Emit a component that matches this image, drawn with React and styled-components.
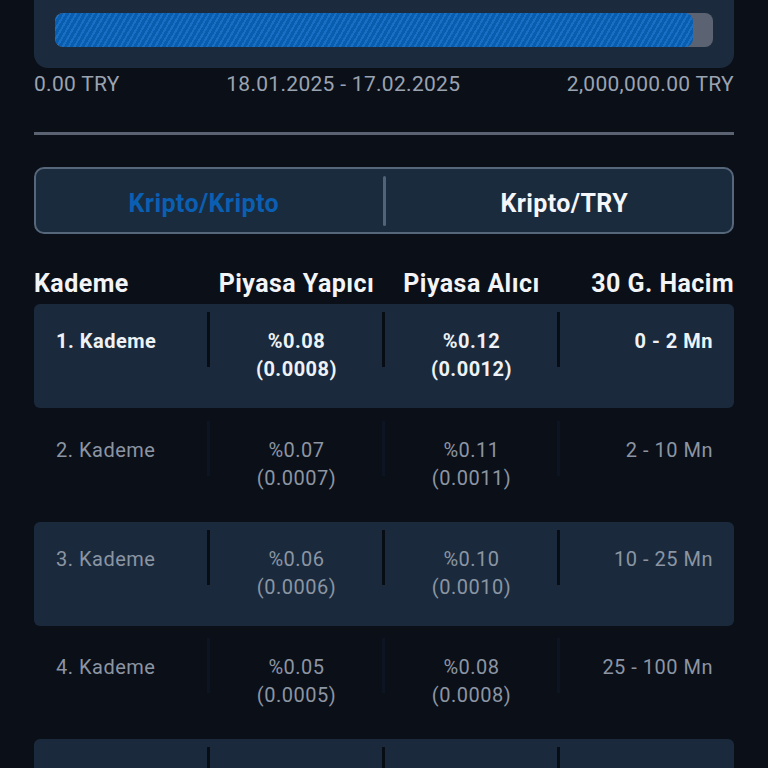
import React from "react";
import styled, { createGlobalStyle } from "styled-components";

const Global = createGlobalStyle`
  html, body { margin: 0; padding: 0; background: #0b0f18; }
  body { font-family: Roboto, "Noto Sans", sans-serif; }
`;

const Page = styled.div`
  width: 700px;
  margin: 0 34px;
`;

const ProgressCard = styled.div`
  background: #1b2b3d;
  border-radius: 0 0 14px 14px;
  padding: 13px 21px 21px;
`;

const Track = styled.div`
  height: 34px;
  background: #5b6373;
  border-radius: 8px;
  overflow: hidden;
`;

const Fill = styled.div`
  height: 100%;
  border-radius: 8px;
  background-color: #0a66c0;
  background-image: repeating-linear-gradient(
    -60deg,
    rgba(255, 255, 255, 0.06) 0px,
    rgba(255, 255, 255, 0.06) 2px,
    rgba(0, 0, 0, 0.09) 2px,
    rgba(0, 0, 0, 0.09) 5px
  );
`;

const Labels = styled.div`
  display: flex;
  justify-content: space-between;
  margin-top: 4px;
  font-size: 21px;
  letter-spacing: 0.3px;
  line-height: 24px;
  color: #9aa3b1;
`;

const Divider = styled.div`
  height: 3px;
  background: #5b6272;
  margin-top: 36px;
`;

const Tabs = styled.div`
  margin-top: 32px;
  height: 63px;
  border: 2px solid #56677b;
  border-radius: 10px;
  background: #1a2b3d;
  display: flex;
  align-items: center;
`;

const Tab = styled.div`
  flex: 1;
  padding-top: 6px;
  text-align: center;
  font-size: 25px;
  letter-spacing: 0.4px;
  font-weight: 700;
  color: ${(p) => (p.$active ? "#0b5fb3" : "#f4f6f9")};
`;

const TabSep = styled.div`
  width: 3px;
  height: 50px;
  margin: 0 11px;
  background: #4f6479;
  border-radius: 2px;
`;

const Grid = styled.div`
  display: grid;
  grid-template-columns: repeat(4, 1fr);
`;

const HeaderRow = styled(Grid)`
  margin-top: 36px;
  font-size: 25px;
  letter-spacing: 0.45px;
  font-weight: 700;
  line-height: 28px;
  color: #f2f4f7;
`;

const HeadCell = styled.div`
  text-align: ${(p) => p.$align};
`;

const Rows = styled.div`
  margin-top: 6px;
  display: flex;
  flex-direction: column;
  gap: 4.75px;
`;

const Row = styled(Grid)`
  height: 104px;
  border-radius: 6px;
  background: ${(p) => (p.$shaded ? "#1a2a3c" : "transparent")};
  color: ${(p) => (p.$active ? "#eef2f6" : "#8b95a3")};
  font-weight: ${(p) => (p.$active ? 700 : 400)};
`;

const Cell = styled.div`
  position: relative;
  padding-top: 23px;
  padding-left: ${(p) => (p.$align === "left" ? "22px" : "0")};
  padding-right: ${(p) => (p.$align === "right" ? "21px" : "0")};
  text-align: ${(p) => p.$align};
  font-size: 20px;
  letter-spacing: 0.5px;
  line-height: 28px;
`;

const Sep = styled.div`
  position: absolute;
  left: -2px;
  top: 8px;
  width: 3px;
  height: 55px;
  background: ${(p) => (p.$shaded ? "#070c15" : "#0e1522")};
`;

const rows = [
  ["1. Kademe", "%0.08", "(0.0008)", "%0.12", "(0.0012)", "0 - 2 Mn"],
  ["2. Kademe", "%0.07", "(0.0007)", "%0.11", "(0.0011)", "2 - 10 Mn"],
  ["3. Kademe", "%0.06", "(0.0006)", "%0.10", "(0.0010)", "10 - 25 Mn"],
  ["4. Kademe", "%0.05", "(0.0005)", "%0.08", "(0.0008)", "25 - 100 Mn"],
  ["5. Kademe", "%0.04", "(0.0004)", "%0.06", "(0.0006)", "100 - 250 Mn"],
];

export default function App() {
  return (
    <Page>
      <Global />
      <ProgressCard>
        <Track>
          <Fill style={{ width: "97%" }} />
        </Track>
      </ProgressCard>
      <Labels>
        <span>0.00 TRY</span>
        <span>18.01.2025 - 17.02.2025</span>
        <span>2,000,000.00 TRY</span>
      </Labels>
      <Divider />
      <Tabs>
        <Tab $active>Kripto/Kripto</Tab>
        <TabSep />
        <Tab>Kripto/TRY</Tab>
      </Tabs>
      <HeaderRow>
        <HeadCell $align="left">Kademe</HeadCell>
        <HeadCell $align="center">Piyasa Yapıcı</HeadCell>
        <HeadCell $align="center">Piyasa Alıcı</HeadCell>
        <HeadCell $align="right">30 G. Hacim</HeadCell>
      </HeaderRow>
      <Rows>
        {rows.map((r, i) => {
          const shaded = i % 2 === 0;
          return (
            <Row key={i} $shaded={shaded} $active={i === 0}>
              <Cell $align="left">{r[0]}</Cell>
              <Cell $align="center">
                <Sep $shaded={shaded} />
                {r[1]}
                <br />
                {r[2]}
              </Cell>
              <Cell $align="center">
                <Sep $shaded={shaded} />
                {r[3]}
                <br />
                {r[4]}
              </Cell>
              <Cell $align="right">
                <Sep $shaded={shaded} />
                {r[5]}
              </Cell>
            </Row>
          );
        })}
      </Rows>
    </Page>
  );
}
